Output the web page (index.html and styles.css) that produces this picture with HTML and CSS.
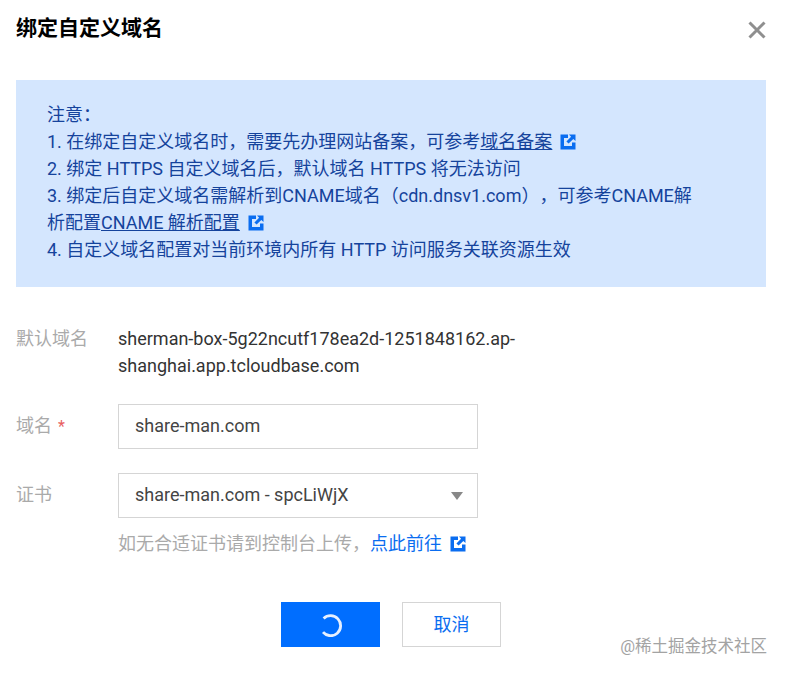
FILE: index.html
```html
<!DOCTYPE html>
<html lang="zh-CN">
<head>
<meta charset="utf-8">
<title>绑定自定义域名</title>
<link rel="stylesheet" href="styles.css">
</head>
<body>
<div class="dialog">
  <header class="dialog-head">
    <h1 class="dialog-title">绑定自定义域名</h1>
    <svg class="close-icon" viewBox="0 0 18 18" width="18" height="18"><path d="M1.5 1.5L16.5 16.5M16.5 1.5L1.5 16.5" fill="none" stroke="#8f8f8f" stroke-width="3"/></svg>
  </header>
  <section class="notice">
    <div>注意：</div>
    <div>1. 在绑定自定义域名时，需要先办理网站备案，可参考<a class="notice-link">域名备案</a><svg class="ext-icon" viewBox="0 0 16 16" width="16" height="16"><path d="M0.5 0.5H8V4H4V12H12V8.5H15.5V15.5H0.5Z" fill="#0a6df0"/><path d="M9 0.5H15.5V7L13.3 4.9L8.6 9.6L6.4 7.4L11.1 2.7Z" fill="#0a6df0"/></svg></div>
    <div>2. 绑定 HTTPS 自定义域名后，默认域名 HTTPS 将无法访问</div>
    <div>3. 绑定后自定义域名需解析到CNAME域名（cdn.dnsv1.com），可参考CNAME解析配置<a class="notice-link">CNAME 解析配置</a><svg class="ext-icon" viewBox="0 0 16 16" width="16" height="16"><path d="M0.5 0.5H8V4H4V12H12V8.5H15.5V15.5H0.5Z" fill="#0a6df0"/><path d="M9 0.5H15.5V7L13.3 4.9L8.6 9.6L6.4 7.4L11.1 2.7Z" fill="#0a6df0"/></svg></div>
    <div>4. 自定义域名配置对当前环境内所有 HTTP 访问服务关联资源生效</div>
  </section>
  <div class="form">
    <div class="row row-text">
      <div class="label">默认域名</div>
      <div class="value">sherman-box-5g22ncutf178ea2d-1251848162.ap-shanghai.app.tcloudbase.com</div>
    </div>
    <div class="row">
      <div class="label label-boxed">域名<span class="req">*</span></div>
      <div class="field">share-man.com</div>
    </div>
    <div class="row row-select">
      <div class="label label-boxed">证书</div>
      <div class="control">
        <div class="field field-select">share-man.com - spcLiWjX<span class="caret"></span></div>
        <div class="hint">如无合适证书请到控制台上传，<a class="hint-link">点此前往</a><svg class="ext-icon" viewBox="0 0 16 16" width="16" height="16"><path d="M0.5 0.5H8V4H4V12H12V8.5H15.5V15.5H0.5Z" fill="#0a6df0"/><path d="M9 0.5H15.5V7L13.3 4.9L8.6 9.6L6.4 7.4L11.1 2.7Z" fill="#0a6df0"/></svg></div>
      </div>
    </div>
  </div>
  <footer class="actions">
    <button class="btn btn-primary" type="button"><svg class="spinner" viewBox="0 0 24 24" width="24" height="24"><path d="M4.6 5.6A10 10 0 1 1 4 19.2" fill="none" stroke="#e6f0ff" stroke-width="2.8"/></svg></button>
    <button class="btn btn-plain" type="button">取消</button>
  </footer>
</div>
<div class="watermark">@稀土掘金技术社区</div>
</body>
</html>
```
FILE: styles.css
```css
html, body {
  margin: 0;
  padding: 0;
  background: #fff;
}
body {
  position: relative;
  width: 787px;
  height: 676px;
  overflow: hidden;
  font-family: Roboto, "Noto Sans CJK SC", sans-serif;
  font-size: 18px;
  line-height: 27px;
  color: #333;
  text-spacing-trim: space-all;
}
.dialog {
  padding: 14px 21px 0 16px;
}
.dialog-head {
  display: flex;
  justify-content: space-between;
  align-items: flex-start;
  height: 66px;
}
.dialog-title {
  margin: 0;
  font-size: 21px;
  line-height: 28px;
  font-weight: 700;
  color: #000;
}
.close-icon {
  margin-top: 7px;
}
.notice {
  padding: 21px 73px 24px 31px;
  background: #d4e6fe;
  color: #15439c;
}
.notice-link {
  text-decoration: underline;
  color: #15439c;
}
.ext-icon {
  margin-left: 8px;
  vertical-align: -2px;
}
.form {
  margin-top: 38px;
  display: flex;
  flex-direction: column;
}
.row {
  display: flex;
}
.row-text {
  margin-bottom: 25px;
}
.row-select {
  margin-top: 24px;
}
.label {
  width: 102px;
  flex: none;
  color: #aaa;
}
.label-boxed {
  height: 42px;
  line-height: 44px;
}
.req {
  margin-left: 6px;
  font-size: 16px;
  color: #e86060;
}
.value {
  width: 400px;
  color: #333;
}
.field {
  box-sizing: border-box;
  position: relative;
  width: 360px;
  height: 45px;
  padding: 0 16px;
  border: 1px solid #d5d5d5;
  line-height: 41px;
  color: #444;
}
.caret {
  position: absolute;
  top: 18px;
  right: 14px;
  width: 0;
  height: 0;
  border-left: 6px solid transparent;
  border-right: 6px solid transparent;
  border-top: 8px solid #888;
}
.hint {
  margin-top: 12px;
  color: #aaa;
}
.hint-link {
  color: #0a6df0;
}
.actions {
  display: flex;
  justify-content: center;
  gap: 22px;
  margin-top: 45px;
}
.btn {
  box-sizing: border-box;
  width: 99px;
  height: 45px;
  padding: 0;
  display: flex;
  align-items: center;
  justify-content: center;
  font: inherit;
}
.btn-primary {
  background: #006eff;
  border: none;
}
.btn-plain {
  background: #fff;
  border: 1px solid #d5d5d5;
  color: #0a6df0;
}
.watermark {
  position: absolute;
  right: 20px;
  top: 636px;
  font-size: 16.5px;
  line-height: 22px;
  color: #a3a3a3;
}
```
